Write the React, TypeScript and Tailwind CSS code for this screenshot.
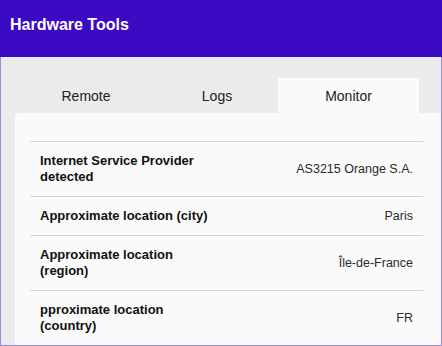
import React from 'react';

const rows = [
  { label: 'Internet Service Provider detected', value: 'AS3215 Orange S.A.' },
  { label: 'Approximate location (city)', value: 'Paris' },
  { label: 'Approximate location (region)', value: 'Île-de-France' },
  { label: 'pproximate location (country)', value: 'FR' },
];

export default function App() {
  return (
    <div className="w-[442px] h-[346px] flex flex-col overflow-hidden font-['Liberation_Sans',Arial,sans-serif]">
      <header className="h-[57px] shrink-0 bg-[#3c0ac3] px-[10px] pt-[15px]">
        <h1 className="text-white text-[16px] leading-5 font-semibold">Hardware Tools</h1>
      </header>

      <div className="flex-1 min-h-0 flex flex-col bg-[#ebebeb] border-x border-b border-[#9d87df] pt-[21px] pl-[14px]">
        <div className="h-[35px] shrink-0 flex text-[14px] text-[#222]">
          <div className="w-[132px] ml-[5px] flex items-center justify-center pt-[2px]">Remote</div>
          <div className="w-[126px] pl-[4px] flex items-center justify-center pt-[2px]">Logs</div>
          <div className="w-[141px] bg-[#fafafa] flex items-center justify-center pt-[2px]">Monitor</div>
        </div>

        <div className="flex-1 min-h-0 overflow-hidden bg-[#fafafa] rounded-tl-[4px] pl-[15px] pr-[18px] pt-[28px]">
          <div className="border-t border-[#d6d6d6]">
            {rows.map((r) => (
              <div key={r.label} className="grid grid-cols-2 items-center border-b border-[#d6d6d6]">
                <div className="px-[10px] py-[11px] text-[13px] leading-4 font-bold text-[#111]">{r.label}</div>
                <div className="px-[10px] py-[11px] text-[12.5px] leading-4 text-right text-[#2b2b2b]">{r.value}</div>
              </div>
            ))}
          </div>
        </div>
      </div>
    </div>
  );
}
